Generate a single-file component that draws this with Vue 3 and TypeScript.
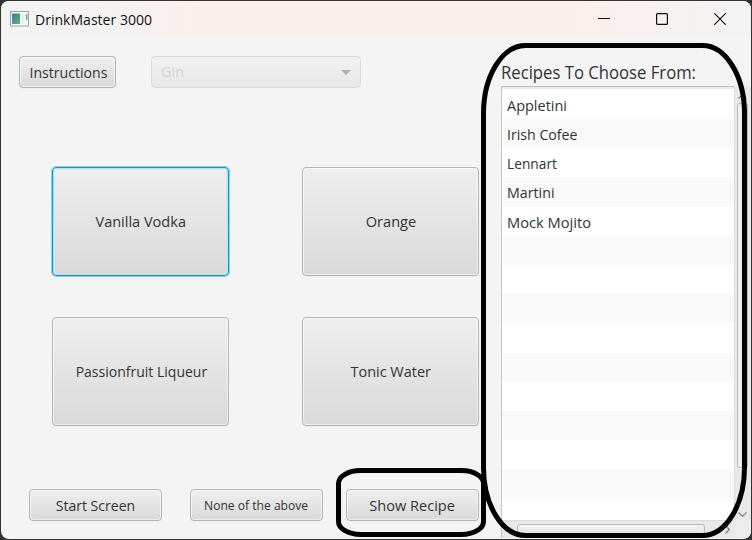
<script setup lang="ts">
import type { Directive } from 'vue'

interface Label {
  text: string
  width: number
}

const ingredients: (Label & { focused?: boolean })[] = [
  { text: 'Vanilla Vodka', width: 90.5, focused: true },
  { text: 'Orange', width: 50.5 },
  { text: 'Passionfruit Liqueur', width: 131.5 },
  { text: 'Tonic Water', width: 80.5 },
]

const recipes: Label[] = [
  { text: 'Appletini', width: 60 },
  { text: 'Irish Cofee', width: 70.5 },
  { text: 'Lennart', width: 50 },
  { text: 'Martini', width: 47.5 },
  { text: 'Mock Mojito', width: 84 },
]

const rowCount = 15

// Condenses a label so that it takes exactly the given width.
const vFit: Directive<HTMLElement, number> = {
  mounted(el, binding) {
    const natural = el.getBoundingClientRect().width
    el.style.transform = `scaleX(${binding.value / natural})`
  },
}
</script>

<template>
  <div class="screen">
    <div class="window">
      <header class="titlebar">
        <svg class="app-icon" width="19" height="16" viewBox="0 0 19 16">
          <defs>
            <linearGradient id="tile" x1="0" y1="0" x2="0.5" y2="1">
              <stop offset="0" stop-color="#4778a6" />
              <stop offset="1" stop-color="#4fae78" />
            </linearGradient>
          </defs>
          <rect x="0.5" y="0.5" width="18" height="14.5" fill="#f7f8f8" stroke="#9fa5aa" />
          <rect x="2" y="2.5" width="8" height="10.5" fill="url(#tile)" />
          <rect x="11.5" y="2.5" width="3" height="10.5" fill="#e9eeee" />
          <rect x="16" y="3" width="1.5" height="6" fill="#69ae91" />
        </svg>
        <span v-fit="117" class="title">DrinkMaster 3000</span>
        <div class="controls">
          <svg width="12" height="12" viewBox="0 0 12 12"><path d="M0 5.5H12" /></svg>
          <svg width="12" height="12" viewBox="0 0 12 12"><rect x="0.6" y="0.6" width="10.8" height="10.8" rx="1" /></svg>
          <svg width="12" height="12" viewBox="0 0 12 12"><path d="M0.3 0.3L11.7 11.7M11.7 0.3L0.3 11.7" /></svg>
        </div>
      </header>

      <div class="content">
        <main class="left">
          <div class="top-row">
            <button class="btn instructions"><span v-fit="78">Instructions</span></button>
            <div class="combo">
              <span v-fit="23" class="lead">Gin</span>
              <svg width="10" height="5" viewBox="0 0 10 5"><path d="M0 0H10L5 5Z" /></svg>
            </div>
          </div>
          <div class="grid">
            <button v-for="item in ingredients" :key="item.text" class="btn" :class="{ focused: item.focused }">
              <span v-fit="item.width">{{ item.text }}</span>
            </button>
          </div>
          <div class="bottom-row">
            <button class="btn start"><span v-fit="79.5">Start Screen</span></button>
            <button class="btn none"><span v-fit="104">None of the above</span></button>
            <button class="btn"><span v-fit="85.5">Show Recipe</span></button>
          </div>
        </main>

        <section class="recipes">
          <h2><span v-fit="195" class="lead">Recipes To Choose From:</span></h2>
          <div class="list">
            <div class="rows">
              <div v-for="n in rowCount" :key="n" class="row">
                <span v-if="recipes[n - 1]" v-fit="recipes[n - 1].width" class="lead">{{ recipes[n - 1].text }}</span>
              </div>
            </div>
            <div class="vbar">
              <svg width="9" height="5" viewBox="0 0 9 5"><path d="M0.5 4.5L4.5 0.8L8.5 4.5" /></svg>
              <div class="thumb"></div>
              <svg width="9" height="5" viewBox="0 0 9 5"><path d="M0.5 0.5L4.5 4.2L8.5 0.5" /></svg>
            </div>
            <div class="hbar">
              <div class="thumb"></div>
              <svg width="5" height="9" viewBox="0 0 5 9"><path d="M0.5 0.5L4.2 4.5L0.5 8.5" /></svg>
            </div>
            <div class="corner"></div>
          </div>
        </section>
      </div>
    </div>

    <svg class="marks" width="752" height="540" viewBox="0 0 752 540">
      <rect x="483.5" y="45.5" width="261" height="490" rx="42" ry="68" />
      <rect x="338.5" y="470.5" width="145" height="64" rx="22" ry="13" />
    </svg>
  </div>
</template>

<style>
body {
  margin: 0;
  overflow: hidden;
}
</style>

<style scoped>
.screen {
  position: relative;
  box-sizing: border-box;
  width: 752px;
  height: 540px;
  padding: 1px;
  background: #333336;
  font-family: "Open Sans", "Noto Sans", sans-serif;
  font-size: 15px;
  color: #333;
}
.screen span {
  display: inline-block;
  white-space: nowrap;
}
.screen .lead,
.screen .title {
  transform-origin: left center;
}
.window {
  width: 750px;
  height: 538px;
  border-radius: 8px;
  overflow: hidden;
  background: #f4f4f4;
}
.titlebar {
  display: flex;
  align-items: center;
  box-sizing: border-box;
  height: 36px;
  padding: 0 24px 0 9px;
  background: linear-gradient(90deg, #f3f3f3 0, #f4f2f1 120px, #fbefec 200px, #fbefec 570px, #f4f2f1 690px, #f3f3f3);
}
.title {
  margin-left: 6px;
  font-size: 14.5px;
  color: #111;
}
.controls {
  display: flex;
  gap: 46px;
  margin-left: auto;
  margin-right: 1px;
}
.controls svg {
  fill: none;
  stroke: #111;
  stroke-width: 1.2;
}
.content {
  display: flex;
  height: 502px;
}
.left {
  display: flex;
  flex-direction: column;
  box-sizing: border-box;
  flex: 0 0 500px;
  padding: 19px 0 0 18px;
}
.top-row {
  display: flex;
  gap: 35px;
  height: 32px;
}
.btn {
  display: flex;
  align-items: center;
  justify-content: center;
  box-sizing: border-box;
  padding: 0;
  border: 1px solid #b5b5b5;
  border-radius: 4px;
  background: linear-gradient(#efefef, #d9d9d9);
  box-shadow: inset 0 0 0 1px rgba(255, 255, 255, 0.55), 0 1px 0 #ededed;
  color: #333;
  font: inherit;
  line-height: 20px;
  white-space: nowrap;
}
.btn.focused {
  border-color: #039ed3;
  box-shadow: inset 0 0 0 1px #b9dfed, inset 0 0 0 2px rgba(205, 230, 240, 0.6), 0 0 0 1px #8fd0e8;
}
.instructions {
  width: 97px;
  padding-left: 1px;
}
.combo {
  display: flex;
  align-items: center;
  justify-content: space-between;
  box-sizing: border-box;
  width: 210px;
  padding: 0 9px;
  border: 1px solid #dadada;
  border-radius: 4px;
  background: linear-gradient(#f2f2f2, #e8e8e8);
  color: #d0d0d0;
  line-height: 18px;
}
.combo span {
  margin-top: -2px;
}
.combo svg {
  fill: #b0b0b0;
}
.grid {
  display: grid;
  grid-template-columns: 177px 177px;
  grid-template-rows: 109px 109px;
  gap: 41px 73px;
  margin: 79px 0 0 33px;
}
.grid .btn {
  padding: 0 0 2px 1px;
}
.bottom-row {
  display: grid;
  grid-template-columns: 133px 133px 133px;
  grid-template-rows: 32px;
  column-gap: 28px;
  margin: 63px 0 0 9.5px;
}
.bottom-row .btn:last-child {
  margin-left: -5px;
  margin-right: 5px;
}
.bottom-row .none {
  font-size: 12.8px;
}
.recipes {
  display: flex;
  flex-direction: column;
  flex: 1;
  min-width: 0;
}
h2 {
  margin: 0;
  padding-top: 23px;
  height: 26px;
  font-size: 18px;
  font-weight: 400;
  line-height: 24px;
  white-space: nowrap;
}
.list {
  display: grid;
  grid-template-columns: 232px 17px;
  grid-template-rows: 434px 18px;
  border-left: 1px solid #c4c4c4;
  background: #e9e9e9;
}
.rows {
  box-sizing: border-box;
  overflow: hidden;
  padding-top: 2.7px;
  border-top: 1px solid #c0c0c0;
  background: #fff;
  box-shadow: inset 0 2px 0 #e8e8e8;
}
.row {
  display: flex;
  align-items: center;
  box-sizing: border-box;
  height: 29.23px;
  padding: 1px 0 0 5px;
  line-height: 20px;
}
.row:nth-child(even) {
  background: #f9f9f9;
}
.vbar {
  display: flex;
  flex-direction: column;
  align-items: center;
  box-sizing: border-box;
  padding: 8px 3px 3px 1px;
  border-left: 1px solid #dedede;
}
.vbar .thumb {
  width: 11px;
  height: 365px;
  margin: 4px 0 auto;
}
.thumb {
  box-sizing: border-box;
  border: 1px solid #b9b9b9;
  border-radius: 3px;
  background: linear-gradient(#f4f4f4, #e2e2e2);
}
.vbar .thumb {
  background: linear-gradient(90deg, #f4f4f4, #e0e0e0);
}
.hbar {
  display: flex;
  align-items: center;
  box-sizing: border-box;
  padding: 0 4px 0 15px;
  border-top: 1px solid #dcdcdc;
}
.hbar .thumb {
  width: 188px;
  height: 11px;
}
.hbar svg {
  margin-left: auto;
}
.vbar svg,
.hbar svg {
  flex: none;
  fill: none;
  stroke: #858585;
  stroke-width: 1.4;
}
.corner {
  background: #ececec;
}
.marks {
  position: absolute;
  inset: 0;
  fill: none;
  stroke: #000;
  stroke-width: 5;
}
</style>
